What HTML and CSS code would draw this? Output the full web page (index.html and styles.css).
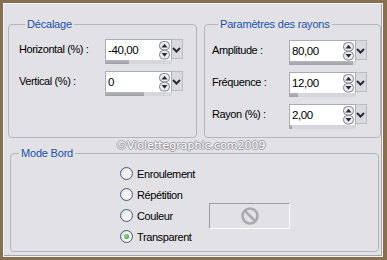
FILE: index.html
```html
<!DOCTYPE html>
<html lang="fr">
<head>
  <meta charset="UTF-8" />
  <title>Vague</title>
  <link rel="stylesheet" href="styles.css">
</head>
<body>

  <div class="panel">
    <div class="top">
      <fieldset class="group group-offset">
        <legend>Décalage</legend>
        <div class="rows">
          <label>Horizontal (%) :</label>
          <div class="spin">
            <div class="field"><span>-40,00</span>
              <svg class="arrows" width="11" height="19" viewBox="0 0 11 19"><rect x="0.5" y="0.5" width="10" height="8.5" rx="4" fill="#ececf0" stroke="#7e8290"/><path d="M2.5 6.5 5.5 2.8 8.5 6.5Z" fill="#2c2c34"/><rect x="0.5" y="9.5" width="10" height="8.5" rx="4" fill="#ececf0" stroke="#7e8290"/><path d="M2.5 12 5.5 15.7 8.5 12Z" fill="#2c2c34"/></svg>
            </div>
            <div class="drop"><svg width="11" height="20" viewBox="0 0 11 20"><path d="M2 8 5.5 11.5 9 8" fill="none" stroke="#2c2c34" stroke-width="2"/></svg></div>
            <div class="track"><div class="fill" style="width:35%"></div></div>
          </div>

          <label>Vertical (%) :</label>
          <div class="spin">
            <div class="field"><span>0</span>
              <svg class="arrows" width="11" height="19" viewBox="0 0 11 19"><rect x="0.5" y="0.5" width="10" height="8.5" rx="4" fill="#ececf0" stroke="#7e8290"/><path d="M2.5 6.5 5.5 2.8 8.5 6.5Z" fill="#2c2c34"/><rect x="0.5" y="9.5" width="10" height="8.5" rx="4" fill="#ececf0" stroke="#7e8290"/><path d="M2.5 12 5.5 15.7 8.5 12Z" fill="#2c2c34"/></svg>
            </div>
            <div class="drop"><svg width="11" height="20" viewBox="0 0 11 20"><path d="M2 8 5.5 11.5 9 8" fill="none" stroke="#2c2c34" stroke-width="2"/></svg></div>
            <div class="track"><div class="fill" style="width:58%"></div></div>
          </div>
        </div>
      </fieldset>

      <fieldset class="group group-rays">
        <legend>Paramètres des rayons</legend>
        <div class="rows rows-narrow">
          <label>Amplitude :</label>
          <div class="spin">
            <div class="field"><span>80,00</span>
              <svg class="arrows" width="11" height="19" viewBox="0 0 11 19"><rect x="0.5" y="0.5" width="10" height="8.5" rx="4" fill="#ececf0" stroke="#7e8290"/><path d="M2.5 6.5 5.5 2.8 8.5 6.5Z" fill="#2c2c34"/><rect x="0.5" y="9.5" width="10" height="8.5" rx="4" fill="#ececf0" stroke="#7e8290"/><path d="M2.5 12 5.5 15.7 8.5 12Z" fill="#2c2c34"/></svg>
            </div>
            <div class="drop"><svg width="11" height="20" viewBox="0 0 11 20"><path d="M2 8 5.5 11.5 9 8" fill="none" stroke="#2c2c34" stroke-width="2"/></svg></div>
            <div class="track"><div class="fill" style="width:95%"></div></div>
          </div>

          <label>Fréquence :</label>
          <div class="spin">
            <div class="field"><span>12,00</span>
              <svg class="arrows" width="11" height="19" viewBox="0 0 11 19"><rect x="0.5" y="0.5" width="10" height="8.5" rx="4" fill="#ececf0" stroke="#7e8290"/><path d="M2.5 6.5 5.5 2.8 8.5 6.5Z" fill="#2c2c34"/><rect x="0.5" y="9.5" width="10" height="8.5" rx="4" fill="#ececf0" stroke="#7e8290"/><path d="M2.5 12 5.5 15.7 8.5 12Z" fill="#2c2c34"/></svg>
            </div>
            <div class="drop"><svg width="11" height="20" viewBox="0 0 11 20"><path d="M2 8 5.5 11.5 9 8" fill="none" stroke="#2c2c34" stroke-width="2"/></svg></div>
            <div class="track"><div class="fill" style="width:12%"></div></div>
          </div>

          <label>Rayon (%) :</label>
          <div class="spin">
            <div class="field"><span>2,00</span>
              <svg class="arrows" width="11" height="19" viewBox="0 0 11 19"><rect x="0.5" y="0.5" width="10" height="8.5" rx="4" fill="#ececf0" stroke="#7e8290"/><path d="M2.5 6.5 5.5 2.8 8.5 6.5Z" fill="#2c2c34"/><rect x="0.5" y="9.5" width="10" height="8.5" rx="4" fill="#ececf0" stroke="#7e8290"/><path d="M2.5 12 5.5 15.7 8.5 12Z" fill="#2c2c34"/></svg>
            </div>
            <div class="drop"><svg width="11" height="20" viewBox="0 0 11 20"><path d="M2 8 5.5 11.5 9 8" fill="none" stroke="#2c2c34" stroke-width="2"/></svg></div>
            <div class="track"><div class="fill" style="width:3%"></div></div>
          </div>
        </div>
      </fieldset>
    </div>

    <fieldset class="group group-mode">
      <legend>Mode Bord</legend>
      <div class="options">
        <div class="option"><span class="radio"></span>Enroulement</div>
        <div class="option"><span class="radio"></span>Répétition</div>
        <div class="option"><span class="radio"></span>Couleur</div>
        <div class="swatch">
          <svg width="20" height="20" viewBox="0 0 20 20"><circle cx="10" cy="10" r="7.5" fill="none" stroke="#a9a9ae" stroke-width="2.6"/><path d="M4.8 4.8 15.2 15.2" stroke="#a9a9ae" stroke-width="2.6"/></svg>
        </div>
        <div class="option"><span class="radio checked"></span>Transparent</div>
      </div>
    </fieldset>

    <div class="watermark">©Violettegraphic.com2009</div>
  </div>

</body>
</html>
```

FILE: styles.css
```css
body {
  margin: 0;
  background-color: #87704f;
  font-family: "Liberation Sans", Arial, sans-serif;
  font-size: 11px;
  letter-spacing: -0.4px;
  color: #000;
}

.panel {
  position: relative;
  box-sizing: border-box;
  width: 380px;
  height: 254px;
  margin: 3px 0 0 3px;
  background-color: #e1e1e6;
  border: 1px solid #f6f6f8;
  box-shadow: inset -1px -1px 0 #a4a4ac;
}

.top {
  display: flex;
  gap: 7px;
  padding: 14px 0 0 4px;
}

.group {
  box-sizing: border-box;
  margin: 0;
  border: 1px solid #b5b5bd;
  border-radius: 4px;
}

.group legend {
  margin-left: 6px;
  padding: 0 2px;
  line-height: 13px;
  color: #2151a9;
  letter-spacing: -0.2px;
}

.group-offset {
  width: 189px;
  height: 120px;
  padding: 8px 0 0 10px;
}

.group-rays {
  width: 177px;
  height: 120px;
  padding: 9px 0 0 7px;
}

.rows {
  display: grid;
  grid-template-columns: 86px auto;
  row-gap: 7px;
  align-items: start;
}

.rows-narrow {
  grid-template-columns: 77px auto;
}

.rows label {
  line-height: 21px;
}

.spin {
  display: grid;
  grid-template-columns: 67px 11px;
  grid-template-rows: 21px 4px;
}

.field {
  display: flex;
  align-items: center;
  box-sizing: border-box;
  padding: 0 1px 0 2px;
  background-color: #fff;
  border: 1px solid #a9adb6;
  border-bottom: none;
  font-size: 11.5px;
}

.field .arrows {
  margin-left: auto;
}

.drop {
  box-sizing: border-box;
  height: 20px;
  background-color: #d9d9e0;
  border: 1px solid #b9bcc6;
  border-left: none;
}

.drop svg {
  display: block;
  margin-left: -1px;
}

.track {
  background-color: #d6d6db;
  border-left: 1px solid #a9adb6;
}

.fill {
  height: 100%;
  background: linear-gradient(#b6b6bd, #9e9ea6);
}

.group-mode {
  width: 369px;
  height: 105px;
  margin: 9px 0 0 6px;
  padding: 3px 0 0 0;
}

.group-mode legend {
  margin-left: 8px;
}

.options {
  display: grid;
  grid-template-columns: 89px 81px;
  grid-template-rows: repeat(4, 21px);
  margin-left: 109px;
}

.option {
  display: flex;
  align-items: center;
  gap: 4px;
  grid-column: 1;
}

.radio {
  box-sizing: border-box;
  width: 13px;
  height: 13px;
  border: 1px solid #4e5c70;
  border-radius: 50%;
  background: radial-gradient(circle at 60% 60%, #f2f2f4 40%, #d4d4da);
  display: flex;
  align-items: center;
  justify-content: center;
}

.radio.checked::after {
  content: "";
  width: 5px;
  height: 5px;
  border-radius: 50%;
  background: radial-gradient(circle at 40% 40%, #8fe08f, #219a21);
}

.swatch {
  grid-column: 2;
  grid-row: 3;
  align-self: center;
  box-sizing: border-box;
  height: 26px;
  display: flex;
  align-items: center;
  justify-content: center;
  border: 1px solid #fff;
  border-top-color: #9c9ca4;
  border-left-color: #9c9ca4;
}

.watermark {
  position: absolute;
  left: 112px;
  top: 135px;
  font-family: "DejaVu Sans", sans-serif;
  font-size: 11px;
  line-height: 13px;
  letter-spacing: 0;
  color: #fff;
  text-shadow: 1px 0 #9a9aa2, -1px 0 #9a9aa2, 0 1px #9a9aa2, 0 -1px #9a9aa2;
}
```
